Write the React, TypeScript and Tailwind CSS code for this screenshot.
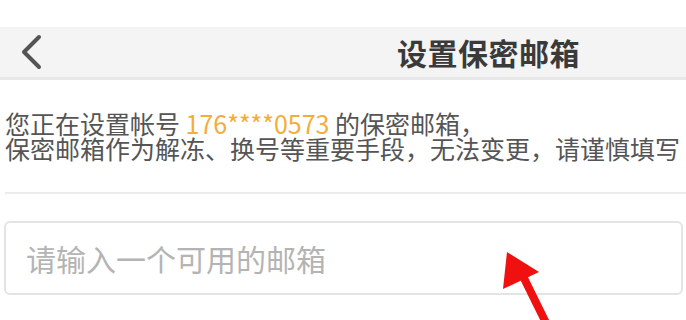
import React from 'react';

const font = { fontFamily: '"Noto Sans CJK SC", "Noto Sans", sans-serif' };

function BackIcon() {
  return (
    <svg width="26" height="36" viewBox="0 0 26 36" className="text-[#555]">
      <path d="M20 3 L5 18 L20 33" fill="none" stroke="currentColor" strokeWidth="4" strokeLinecap="round" strokeLinejoin="round" />
    </svg>
  );
}

function RedArrow() {
  return (
    <svg className="absolute left-0 top-0 pointer-events-none" width="686" height="320" viewBox="0 0 686 320">
      <line x1="518" y1="266" x2="552" y2="335" stroke="#f01010" strokeWidth="8" />
      <polygon points="507,252 539,272 503,289" fill="#f01010" />
    </svg>
  );
}

export default function App() {
  return (
    <div className="relative w-[686px] h-[320px] overflow-hidden bg-white" style={font}>
      {/* Header */}
      <div className="mt-[27px] h-[53px] bg-[#f4f4f4] border-b-[3px] border-[#e8e8e8] flex items-center">
        <div className="ml-[19px] flex items-center">
          <BackIcon />
        </div>
        <h1 className="ml-[352px] text-[30px] leading-none font-bold text-[#3a3a3a] tracking-[0.5px]">设置保密邮箱</h1>
      </div>

      {/* Notice */}
      <div className="pl-[5px] pt-[31px] text-[25px] leading-[25px] text-[#555] whitespace-nowrap">
        <p>
          您正在设置帐号 <span className="text-[#f3ad3c]">176****0573</span> 的保密邮箱，
        </p>
        <p>保密邮箱作为解冻、换号等重要手段，无法变更，请谨慎填写</p>
      </div>

      <div className="ml-[5px] mt-[31px] border-t-2 border-[#ececec]" />

      {/* Input */}
      <div className="ml-[4px] mr-[3px] mt-[27px] h-[74px] rounded-md border-2 border-[#e4e4e4] flex items-center px-[20px]">
        <input
          className="w-full bg-transparent outline-none text-[30px] placeholder:text-[#b4b4b4] text-[#333]"
          placeholder="请输入一个可用的邮箱"
          style={font}
        />
      </div>

      <RedArrow />
    </div>
  );
}
